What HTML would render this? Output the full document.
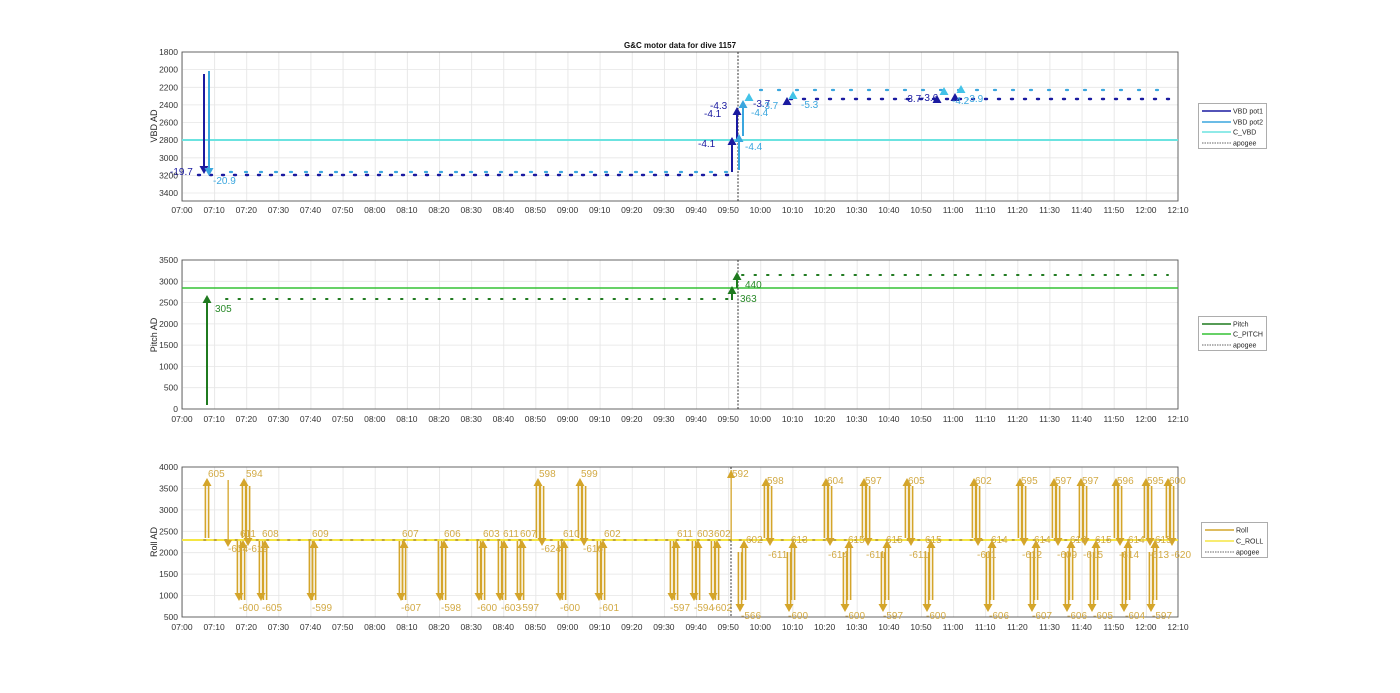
<!DOCTYPE html>
<html><head><meta charset="utf-8"><style>
html,body{margin:0;padding:0;background:#fff;}
svg{display:block;font-family:"Liberation Sans",sans-serif;}
.tk{font-size:8.5px;fill:#333;}
.yl{font-size:9px;fill:#262626;}
.lg{font-size:7px;fill:#262626;}
.v1{font-size:10px;fill:#1a1aa0;}
.v2{font-size:10px;fill:#3aa6de;}
.g{font-size:10px;fill:#2a8a2a;}
.r{font-size:10px;fill:#d2aa45;}
</style></head><body>
<svg width="1400" height="693" viewBox="0 0 1400 693" xmlns="http://www.w3.org/2000/svg">
<defs>
<pattern id="gv" x="182" y="0" width="32.13" height="10" patternUnits="userSpaceOnUse"><rect x="0" y="0" width="0.8" height="10" fill="#e3e3e3"/></pattern>
<g id="ar" fill="#d4a52a" stroke="none"><rect x="-2.4" y="0" width="1.6" height="53"/><rect x="0.8" y="0" width="1.6" height="53"/><path d="M-4.5 52 L4.5 52 L0 60 Z"/></g>
<g id="ua" fill="#d4a52a" stroke="none"><rect x="-2.4" y="7" width="1.6" height="53"/><rect x="0.8" y="7" width="1.6" height="53"/><path d="M-4.5 8 L4.5 8 L0 0 Z"/></g>
</defs>

<text x="680" y="48" text-anchor="middle" style="font-size:8px;font-weight:bold;fill:#111">G&amp;C motor data for dive 1157</text>

<!-- ===== PLOT 1 ===== -->
<rect x="182" y="52" width="996" height="149" fill="url(#gv)"/>
<g stroke="#e6e6e6" stroke-width="0.8">
<line x1="182" x2="1178" y1="69.6" y2="69.6"/><line x1="182" x2="1178" y1="87.3" y2="87.3"/><line x1="182" x2="1178" y1="104.9" y2="104.9"/><line x1="182" x2="1178" y1="122.6" y2="122.6"/><line x1="182" x2="1178" y1="140.2" y2="140.2"/><line x1="182" x2="1178" y1="157.8" y2="157.8"/><line x1="182" x2="1178" y1="175.4" y2="175.4"/><line x1="182" x2="1178" y1="193" y2="193"/>
</g>
<rect x="182" y="52" width="996" height="149" fill="none" stroke="#555" stroke-width="0.9"/>
<line x1="182" x2="1178" y1="140" y2="140" stroke="#6be3e0" stroke-width="2"/>
<line x1="230" x2="732" y1="172" y2="172" stroke="#3aa6de" stroke-width="2.2" stroke-dasharray="2 13" stroke-linecap="round"/>
<line x1="198" x2="732" y1="175" y2="175" stroke="#1a1aa0" stroke-width="2.4" stroke-dasharray="2 10" stroke-linecap="round"/>
<line x1="760" x2="1172" y1="90" y2="90" stroke="#3aa6de" stroke-width="2.2" stroke-dasharray="2 16" stroke-linecap="round"/>
<line x1="790" x2="1170" y1="99" y2="99" stroke="#1a1aa0" stroke-width="2.4" stroke-dasharray="2 11" stroke-linecap="round"/>
<line x1="738" x2="738" y1="52" y2="201" stroke="#333" stroke-width="1" stroke-dasharray="2 1.5"/>
<g stroke="#1a1aa0" stroke-width="2" fill="#1a1aa0">
<line x1="204" y1="74" x2="204" y2="166"/><path d="M199.5 166 L208.5 166 L204 174 Z" stroke="none"/>
<line x1="732" y1="172" x2="732" y2="144"/><path d="M727.5 145 L736.5 145 L732 137 Z" stroke="none"/>
<line x1="737" y1="140" x2="737" y2="114"/><path d="M732.5 115 L741.5 115 L737 107 Z" stroke="none"/>
<path d="M782.5 105 L791.5 105 L787 97 Z M932.5 103 L941.5 103 L937 95 Z M950.5 101 L959.5 101 L955 93 Z" stroke="none"/>
</g>
<g stroke="#3aa6de" stroke-width="2" fill="#3aa6de">
<line x1="209" y1="71" x2="209" y2="168"/><path d="M204.5 168 L213.5 168 L209 176 Z" stroke="none"/>
<line x1="739" y1="170" x2="739" y2="141"/><path d="M734.5 142 L743.5 142 L739 134 Z" stroke="none"/>
<line x1="743" y1="136" x2="743" y2="107"/><path d="M738.5 108 L747.5 108 L743 100 Z" stroke="none"/>
</g>
<g fill="#43c3e8"><path d="M744.5 101 L753.5 101 L749 93 Z M788.5 99 L797.5 99 L793 91 Z M939.5 95 L948.5 95 L944 87 Z M956.5 93 L965.5 93 L961 85 Z"/></g>
<text class="v1" x="170" y="175">-19.7</text><text class="v2" x="213" y="184">-20.9</text>
<text class="v1" x="698" y="147">-4.1</text><text class="v1" x="704" y="117">-4.1</text><text class="v1" x="710" y="109">-4.3</text>
<text class="v2" x="745" y="150">-4.4</text><text class="v2" x="751" y="116">-4.4</text>
<text class="v1" x="753" y="107">-3.7</text><text class="v2" x="761" y="109">-3.7</text><text class="v2" x="801" y="108">-5.3</text>
<text class="v1" x="904" y="102">-3.7</text><text class="v1" x="921" y="101">-3.6</text><text class="v2" x="952" y="104">-4.2</text><text class="v2" x="966" y="102">-3.9</text>
<g class="tk" text-anchor="end"><text x="178" y="55">1800</text><text x="178" y="72.6">2000</text><text x="178" y="90.3">2200</text><text x="178" y="107.9">2400</text><text x="178" y="125.6">2600</text><text x="178" y="143.2">2800</text><text x="178" y="160.8">3000</text><text x="178" y="178.4">3200</text><text x="178" y="196">3400</text></g>
<text class="yl" transform="translate(157,126) rotate(-90)" text-anchor="middle">VBD AD</text>
<text class="tk" y="213" text-anchor="middle"><tspan x="182">07:00</tspan><tspan x="214.1">07:10</tspan><tspan x="246.3">07:20</tspan><tspan x="278.4">07:30</tspan><tspan x="310.5">07:40</tspan><tspan x="342.7">07:50</tspan><tspan x="374.8">08:00</tspan><tspan x="406.9">08:10</tspan><tspan x="439">08:20</tspan><tspan x="471.2">08:30</tspan><tspan x="503.3">08:40</tspan><tspan x="535.4">08:50</tspan><tspan x="567.6">09:00</tspan><tspan x="599.7">09:10</tspan><tspan x="631.8">09:20</tspan><tspan x="663.9">09:30</tspan><tspan x="696.1">09:40</tspan><tspan x="728.2">09:50</tspan><tspan x="760.3">10:00</tspan><tspan x="792.5">10:10</tspan><tspan x="824.6">10:20</tspan><tspan x="856.7">10:30</tspan><tspan x="888.9">10:40</tspan><tspan x="921">10:50</tspan><tspan x="953.1">11:00</tspan><tspan x="985.2">11:10</tspan><tspan x="1017.4">11:20</tspan><tspan x="1049.5">11:30</tspan><tspan x="1081.6">11:40</tspan><tspan x="1113.8">11:50</tspan><tspan x="1145.9">12:00</tspan><tspan x="1178">12:10</tspan></text>
<rect x="1198.5" y="103.5" width="68" height="45" fill="#fff" stroke="#999" stroke-width="0.8"/>
<line x1="1202" x2="1231" y1="111" y2="111" stroke="#1a1aa0" stroke-width="1.5"/><text class="lg" x="1233" y="113.5">VBD pot1</text>
<line x1="1202" x2="1231" y1="122" y2="122" stroke="#3aa6de" stroke-width="1.5"/><text class="lg" x="1233" y="124.5">VBD pot2</text>
<line x1="1202" x2="1231" y1="132" y2="132" stroke="#6be3e0" stroke-width="1.5"/><text class="lg" x="1233" y="134.5">C_VBD</text>
<line x1="1202" x2="1231" y1="143" y2="143" stroke="#333" stroke-width="0.8" stroke-dasharray="1.5 1"/><text class="lg" x="1233" y="145.5">apogee</text>

<!-- ===== PLOT 2 ===== -->
<rect x="182" y="260" width="996" height="149" fill="url(#gv)"/>
<g stroke="#e6e6e6" stroke-width="0.8">
<line x1="182" x2="1178" y1="281.3" y2="281.3"/><line x1="182" x2="1178" y1="302.6" y2="302.6"/><line x1="182" x2="1178" y1="323.9" y2="323.9"/><line x1="182" x2="1178" y1="345.1" y2="345.1"/><line x1="182" x2="1178" y1="366.4" y2="366.4"/><line x1="182" x2="1178" y1="387.7" y2="387.7"/>
</g>
<rect x="182" y="260" width="996" height="149" fill="none" stroke="#555" stroke-width="0.9"/>
<line x1="182" x2="1178" y1="288" y2="288" stroke="#35c235" stroke-width="1.5"/>
<line x1="226" x2="728" y1="299" y2="299" stroke="#1f7a1f" stroke-width="2" stroke-dasharray="1.5 11" stroke-linecap="round"/>
<line x1="742" x2="1168" y1="275" y2="275" stroke="#1f7a1f" stroke-width="2" stroke-dasharray="1.5 11" stroke-linecap="round"/>
<line x1="738" x2="738" y1="260" y2="409" stroke="#333" stroke-width="1" stroke-dasharray="2 1.5"/>
<g stroke="#1f7a1f" stroke-width="2" fill="#1f7a1f">
<line x1="207" y1="405" x2="207" y2="302"/><path d="M202.5 303 L211.5 303 L207 295 Z" stroke="none"/>
<line x1="732" y1="300" x2="732" y2="292"/><path d="M727.5 294 L736.5 294 L732 286 Z" stroke="none"/>
<line x1="737" y1="288" x2="737" y2="278"/><path d="M732.5 280 L741.5 280 L737 272 Z" stroke="none"/>
</g>
<text class="g" x="215" y="312">305</text><text class="g" x="745" y="288">440</text><text class="g" x="740" y="302">363</text>
<g class="tk" text-anchor="end"><text x="178" y="263">3500</text><text x="178" y="284.3">3000</text><text x="178" y="305.6">2500</text><text x="178" y="326.9">2000</text><text x="178" y="348.1">1500</text><text x="178" y="369.4">1000</text><text x="178" y="390.7">500</text><text x="178" y="412">0</text></g>
<text class="yl" transform="translate(157,335) rotate(-90)" text-anchor="middle">Pitch AD</text>
<text class="tk" y="422" text-anchor="middle"><tspan x="182">07:00</tspan><tspan x="214.1">07:10</tspan><tspan x="246.3">07:20</tspan><tspan x="278.4">07:30</tspan><tspan x="310.5">07:40</tspan><tspan x="342.7">07:50</tspan><tspan x="374.8">08:00</tspan><tspan x="406.9">08:10</tspan><tspan x="439">08:20</tspan><tspan x="471.2">08:30</tspan><tspan x="503.3">08:40</tspan><tspan x="535.4">08:50</tspan><tspan x="567.6">09:00</tspan><tspan x="599.7">09:10</tspan><tspan x="631.8">09:20</tspan><tspan x="663.9">09:30</tspan><tspan x="696.1">09:40</tspan><tspan x="728.2">09:50</tspan><tspan x="760.3">10:00</tspan><tspan x="792.5">10:10</tspan><tspan x="824.6">10:20</tspan><tspan x="856.7">10:30</tspan><tspan x="888.9">10:40</tspan><tspan x="921">10:50</tspan><tspan x="953.1">11:00</tspan><tspan x="985.2">11:10</tspan><tspan x="1017.4">11:20</tspan><tspan x="1049.5">11:30</tspan><tspan x="1081.6">11:40</tspan><tspan x="1113.8">11:50</tspan><tspan x="1145.9">12:00</tspan><tspan x="1178">12:10</tspan></text>
<rect x="1198.5" y="316.5" width="68" height="34" fill="#fff" stroke="#999" stroke-width="0.8"/>
<line x1="1202" x2="1231" y1="324" y2="324" stroke="#1f7a1f" stroke-width="1.5"/><text class="lg" x="1233" y="326.5">Pitch</text>
<line x1="1202" x2="1231" y1="334" y2="334" stroke="#35c235" stroke-width="1.5"/><text class="lg" x="1233" y="336.5">C_PITCH</text>
<line x1="1202" x2="1231" y1="345" y2="345" stroke="#333" stroke-width="0.8" stroke-dasharray="1.5 1"/><text class="lg" x="1233" y="347.5">apogee</text>

<!-- ===== PLOT 3 ===== -->
<rect x="182" y="467" width="996" height="150" fill="url(#gv)"/>
<g stroke="#e6e6e6" stroke-width="0.8">
<line x1="182" x2="1178" y1="488.4" y2="488.4"/><line x1="182" x2="1178" y1="509.9" y2="509.9"/><line x1="182" x2="1178" y1="531.3" y2="531.3"/><line x1="182" x2="1178" y1="552.7" y2="552.7"/><line x1="182" x2="1178" y1="574.1" y2="574.1"/><line x1="182" x2="1178" y1="595.6" y2="595.6"/>
</g>
<rect x="182" y="467" width="996" height="150" fill="none" stroke="#555" stroke-width="0.9"/>
<line x1="182" x2="1178" y1="540" y2="540" stroke="#f5e642" stroke-width="2"/>
<line x1="204" x2="1172" y1="540" y2="540" stroke="#b89a3a" stroke-width="1.8" stroke-dasharray="1.5 9" stroke-linecap="round"/>
<line x1="731" x2="731" y1="467" y2="617" stroke="#333" stroke-width="1" stroke-dasharray="2 1.5"/>
<g fill="#d4a52a">
<use href="#ua" x="207" y="478"/><rect x="227.5" y="480" width="1.3" height="62"/><path d="M224 540 L232 540 L228 547 Z"/>
<use href="#ar" x="239" y="541"/><use href="#ua" x="243" y="540"/>
<use href="#ua" x="244" y="478"/><use href="#ar" x="248" y="486"/>
<use href="#ar" x="261" y="541"/><use href="#ua" x="265" y="540"/>
<use href="#ar" x="311" y="541"/><use href="#ua" x="314" y="540"/>
<use href="#ar" x="401" y="541"/><use href="#ua" x="404" y="540"/>
<use href="#ar" x="440" y="541"/><use href="#ua" x="444" y="540"/>
<use href="#ar" x="479" y="541"/><use href="#ua" x="483" y="540"/>
<use href="#ar" x="500" y="541"/><use href="#ua" x="504" y="540"/>
<use href="#ar" x="519" y="541"/><use href="#ua" x="522" y="540"/>
<use href="#ua" x="538" y="478"/><use href="#ar" x="542" y="486"/>
<use href="#ar" x="560" y="541"/><use href="#ua" x="564" y="540"/>
<use href="#ua" x="580" y="478"/><use href="#ar" x="584" y="486"/>
<use href="#ar" x="599" y="541"/><use href="#ua" x="603" y="540"/>
<use href="#ar" x="672" y="541"/><use href="#ua" x="676" y="540"/>
<use href="#ar" x="694" y="541"/><use href="#ua" x="698" y="540"/>
<use href="#ar" x="713" y="541"/><use href="#ua" x="717" y="540"/>
<rect x="730.5" y="470" width="1.3" height="70"/><path d="M727 478 L735 478 L731 470 Z"/>
<use href="#ar" x="740" y="552"/><use href="#ua" x="744" y="540"/>
<use href="#ua" x="766" y="478"/><use href="#ar" x="770" y="486"/>
<use href="#ar" x="789" y="552"/><use href="#ua" x="793" y="540"/>
<use href="#ua" x="826" y="478"/><use href="#ar" x="830" y="486"/>
<use href="#ar" x="845" y="552"/><use href="#ua" x="849" y="540"/>
<use href="#ua" x="864" y="478"/><use href="#ar" x="868" y="486"/>
<use href="#ar" x="883" y="552"/><use href="#ua" x="887" y="540"/>
<use href="#ua" x="907" y="478"/><use href="#ar" x="911" y="486"/>
<use href="#ar" x="927" y="552"/><use href="#ua" x="931" y="540"/>
<use href="#ua" x="974" y="478"/><use href="#ar" x="978" y="486"/>
<use href="#ar" x="988" y="552"/><use href="#ua" x="992" y="540"/>
<use href="#ua" x="1020" y="478"/><use href="#ar" x="1024" y="486"/>
<use href="#ar" x="1032" y="552"/><use href="#ua" x="1036" y="540"/>
<use href="#ua" x="1054" y="478"/><use href="#ar" x="1058" y="486"/>
<use href="#ar" x="1067" y="552"/><use href="#ua" x="1071" y="540"/>
<use href="#ua" x="1081" y="478"/><use href="#ar" x="1085" y="486"/>
<use href="#ar" x="1092" y="552"/><use href="#ua" x="1096" y="540"/>
<use href="#ua" x="1116" y="478"/><use href="#ar" x="1120" y="486"/>
<use href="#ar" x="1124" y="552"/><use href="#ua" x="1128" y="540"/>
<use href="#ua" x="1146" y="478"/><use href="#ar" x="1150" y="486"/>
<use href="#ar" x="1151" y="552"/><use href="#ua" x="1155" y="540"/>
<use href="#ua" x="1168" y="478"/><use href="#ar" x="1172" y="486"/>
</g>
<g class="r">
<text x="208" y="477">605</text><text x="246" y="477">594</text><text x="228" y="552">-614-619</text>
<text x="240" y="537">611</text><text x="239" y="611">-600</text><text x="262" y="537">608</text><text x="262" y="611">-605</text>
<text x="312" y="537">609</text><text x="312" y="611">-599</text><text x="402" y="537">607</text><text x="401" y="611">-607</text>
<text x="444" y="537">606</text><text x="441" y="611">-598</text><text x="483" y="537">603</text><text x="477" y="611">-600</text>
<text x="503" y="537">611</text><text x="501" y="611">-603</text><text x="520" y="537">607</text><text x="519" y="611">-597</text>
<text x="539" y="477">598</text><text x="541" y="552">-624</text><text x="563" y="537">610</text><text x="560" y="611">-600</text>
<text x="581" y="477">599</text><text x="583" y="552">-616</text><text x="604" y="537">602</text><text x="599" y="611">-601</text>
<text x="677" y="537">611</text><text x="670" y="611">-597</text><text x="697" y="537">603</text><text x="694" y="611">-594</text>
<text x="714" y="537">602</text><text x="712" y="611">-602</text><text x="732" y="477">592</text>
<text x="746" y="543">602</text><text x="741" y="619">-566</text><text x="767" y="484">598</text><text x="768" y="558">-611</text>
<text x="791" y="543">613</text><text x="788" y="619">-600</text><text x="827" y="484">604</text><text x="828" y="558">-614</text>
<text x="848" y="543">615</text><text x="845" y="619">-600</text><text x="865" y="484">597</text><text x="866" y="558">-611</text>
<text x="886" y="543">615</text><text x="883" y="619">-597</text><text x="908" y="484">605</text><text x="909" y="558">-611</text>
<text x="925" y="543">615</text><text x="926" y="619">-600</text><text x="975" y="484">602</text><text x="977" y="558">-611</text>
<text x="991" y="543">614</text><text x="989" y="619">-606</text><text x="1021" y="484">595</text><text x="1022" y="558">-612</text>
<text x="1034" y="543">614</text><text x="1032" y="619">-607</text><text x="1055" y="484">597</text><text x="1057" y="558">-609</text>
<text x="1070" y="543">613</text><text x="1067" y="619">-606</text><text x="1082" y="484">597</text><text x="1083" y="558">-615</text>
<text x="1095" y="543">615</text><text x="1093" y="619">-605</text><text x="1117" y="484">596</text><text x="1119" y="558">-614</text>
<text x="1128" y="543">614</text><text x="1125" y="619">-604</text><text x="1147" y="484">595</text><text x="1149" y="558">-613</text>
<text x="1155" y="543">615</text><text x="1152" y="619">-597</text><text x="1169" y="484">600</text><text x="1171" y="558">-620</text>
</g>
<g class="tk" text-anchor="end"><text x="178" y="470">4000</text><text x="178" y="491.4">3500</text><text x="178" y="512.9">3000</text><text x="178" y="534.3">2500</text><text x="178" y="555.7">2000</text><text x="178" y="577.1">1500</text><text x="178" y="598.6">1000</text><text x="178" y="620">500</text></g>
<text class="yl" transform="translate(157,542) rotate(-90)" text-anchor="middle">Roll AD</text>
<text class="tk" y="630" text-anchor="middle"><tspan x="182">07:00</tspan><tspan x="214.1">07:10</tspan><tspan x="246.3">07:20</tspan><tspan x="278.4">07:30</tspan><tspan x="310.5">07:40</tspan><tspan x="342.7">07:50</tspan><tspan x="374.8">08:00</tspan><tspan x="406.9">08:10</tspan><tspan x="439">08:20</tspan><tspan x="471.2">08:30</tspan><tspan x="503.3">08:40</tspan><tspan x="535.4">08:50</tspan><tspan x="567.6">09:00</tspan><tspan x="599.7">09:10</tspan><tspan x="631.8">09:20</tspan><tspan x="663.9">09:30</tspan><tspan x="696.1">09:40</tspan><tspan x="728.2">09:50</tspan><tspan x="760.3">10:00</tspan><tspan x="792.5">10:10</tspan><tspan x="824.6">10:20</tspan><tspan x="856.7">10:30</tspan><tspan x="888.9">10:40</tspan><tspan x="921">10:50</tspan><tspan x="953.1">11:00</tspan><tspan x="985.2">11:10</tspan><tspan x="1017.4">11:20</tspan><tspan x="1049.5">11:30</tspan><tspan x="1081.6">11:40</tspan><tspan x="1113.8">11:50</tspan><tspan x="1145.9">12:00</tspan><tspan x="1178">12:10</tspan></text>
<rect x="1201.5" y="522.5" width="66" height="35" fill="#fff" stroke="#999" stroke-width="0.8"/>
<line x1="1205" x2="1234" y1="530" y2="530" stroke="#d4a52a" stroke-width="1.5"/><text class="lg" x="1236" y="532.5">Roll</text>
<line x1="1205" x2="1234" y1="541" y2="541" stroke="#f5e642" stroke-width="1.5"/><text class="lg" x="1236" y="543.5">C_ROLL</text>
<line x1="1205" x2="1234" y1="552" y2="552" stroke="#333" stroke-width="0.8" stroke-dasharray="1.5 1"/><text class="lg" x="1236" y="554.5">apogee</text>
</svg>
</body></html>
